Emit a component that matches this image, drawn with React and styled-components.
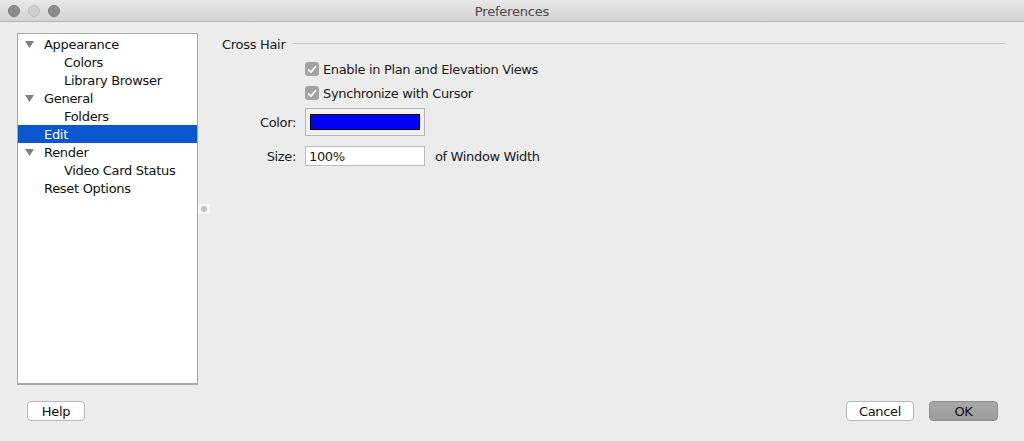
import React from "react";
import styled, { createGlobalStyle } from "styled-components";

const Global = createGlobalStyle`
  html, body { margin: 0; padding: 0; background: #ececec; }
  body { font-family: "DejaVu Sans", "Liberation Sans", sans-serif; font-size: 12px; color: #1a1a1a; }
  * { box-sizing: border-box; }
`;

const Window = styled.div`
  width: 1024px;
  height: 441px;
  display: flex;
  flex-direction: column;
  background: #ececec;
  overflow: hidden;
`;

const TitleBar = styled.div`
  height: 22px;
  flex: none;
  display: grid;
  grid-template-columns: 1fr auto 1fr;
  align-items: center;
  background: linear-gradient(#e9e9e9, #d3d3d3);
  border-bottom: 1px solid #b4b4b4;
`;

const Lights = styled.div`
  display: flex;
  gap: 8px;
  padding-left: 8px;
`;

const Light = styled.span`
  width: 12px;
  height: 12px;
  border-radius: 50%;
  background: ${(p) => (p.$dim ? "#d0d0d0" : "#8c8c8c")};
  border: 1px solid ${(p) => (p.$dim ? "#bdbdbd" : "#7b7b7b")};
`;

const Title = styled.div`
  font-size: 13px;
  color: #4a4a4a;
  letter-spacing: -0.2px;
  padding-top: 1px;
`;

const Main = styled.div`
  flex: 1;
  display: flex;
  padding-top: 11px;
  min-height: 0;
`;

const Sidebar = styled.div`
  margin-left: 17px;
  width: 181px;
  height: 352px;
  flex: none;
  background: #fff;
  border: 1px solid #a7a7a7;
  border-bottom-width: 2px;
  padding-top: 1px;
`;

const Row = styled.div`
  height: 18px;
  display: flex;
  align-items: center;
  position: relative;
  padding-left: ${(p) => (p.$child ? 46 : 26)}px;
  background: ${(p) => (p.$selected ? "#0b57d0" : "transparent")};
  color: ${(p) => (p.$selected ? "#fff" : "#111")};
  font-size: 13px;
  letter-spacing: -0.3px;
`;

const Tri = styled.svg`
  position: absolute;
  left: 7px;
  top: 6px;
`;

const Splitter = styled.div`
  width: 24px;
  flex: none;
  display: flex;
  align-items: center;
`;

const Handle = styled.div`
  width: 12px;
  height: 10px;
  background: #f6f6f6;
  display: flex;
  align-items: center;
  justify-content: center;
  &::after {
    content: "";
    width: 6px;
    height: 6px;
    border-radius: 50%;
    background: #c4c4c4;
  }
`;

const Content = styled.div`
  flex: 1;
  padding-right: 19px;
  display: flex;
  flex-direction: column;
`;

const Heading = styled.div`
  height: 22px;
  display: flex;
  align-items: center;
  gap: 8px;
  font-size: 13px;
  color: #1a1a1a;
  letter-spacing: -0.3px;
  &::after {
    content: "";
    flex: 1;
    height: 1px;
    background: #c9c9c9;
    margin-top: -1px;
  }
`;

const Form = styled.div`
  display: grid;
  grid-template-columns: 74px auto 1fr;
  column-gap: 9px;
  align-items: center;
  margin-top: 5px;
  font-size: 13px;
  letter-spacing: -0.35px;
`;

const Label = styled.div`
  text-align: right;
  grid-column: 1;
`;

const CheckRow = styled.label`
  grid-column: 2 / 4;
  height: 18px;
  display: flex;
  align-items: center;
  gap: 4px;
  margin-bottom: ${(p) => p.$mb || 0}px;
`;

const Box = styled.span`
  width: 14px;
  height: 14px;
  border-radius: 3px;
  background: #a4a4a4;
  display: flex;
  align-items: center;
  justify-content: center;
`;

const Well = styled.div`
  grid-column: 2;
  width: 120px;
  height: 28px;
  border: 1px solid #b5b5b5;
  background: #f0f0f0;
  padding: 5px 4px;
  margin-top: 6px;
`;

const Swatch = styled.div`
  width: 100%;
  height: 100%;
  background: ${(p) => p.$color};
  border: 1px solid #000;
`;

const Input = styled.div`
  grid-column: 2;
  width: 120px;
  height: 20px;
  border: 1px solid #bababa;
  background: #fff;
  padding-left: 3px;
  display: flex;
  align-items: center;
  margin-top: 10px;
`;

const After = styled.div`
  grid-column: 3;
  margin-top: 10px;
  padding-left: 1px;
`;

const RowLabel = styled(Label)`
  margin-top: ${(p) => p.$mt || 0}px;
`;

const Footer = styled.div`
  height: 56px;
  flex: none;
  display: flex;
  align-items: flex-start;
  padding: 16px 26px 0 27px;
  gap: 15px;
`;

const Button = styled.button`
  height: 20px;
  width: ${(p) => p.$w}px;
  border-radius: 4px;
  font-family: inherit;
  font-size: 13px;
  letter-spacing: -0.3px;
  padding: 0;
  color: #111;
  border: 1px solid ${(p) => (p.$primary ? "#8f8f8f" : "#b8b8b8")};
  background: ${(p) => (p.$primary ? "linear-gradient(#a9a9a9, #9c9c9c)" : "#fff")};
  margin-left: ${(p) => (p.$push ? "auto" : "0")};
`;

const tree = [
  { label: "Appearance", open: true },
  { label: "Colors", child: true },
  { label: "Library Browser", child: true },
  { label: "General", open: true },
  { label: "Folders", child: true },
  { label: "Edit", selected: true },
  { label: "Render", open: true },
  { label: "Video Card Status", child: true },
  { label: "Reset Options" },
];

const Check = () => (
  <svg width="10" height="9" viewBox="0 0 10 9">
    <path d="M1.5 4.8 L4 7.2 L8.5 1.5" fill="none" stroke="#fff" strokeWidth="1.6" strokeLinecap="round" strokeLinejoin="round" />
  </svg>
);

export default function App() {
  return (
    <>
      <Global />
      <Window>
        <TitleBar>
          <Lights>
            <Light />
            <Light $dim />
            <Light />
          </Lights>
          <Title>Preferences</Title>
          <div />
        </TitleBar>
        <Main>
          <Sidebar>
            {tree.map((t) => (
              <Row key={t.label} $child={t.child} $selected={t.selected}>
                {t.open && (
                  <Tri width="9" height="7" viewBox="0 0 9 7">
                    <path d="M0 0 H9 L4.5 7 Z" fill="#808080" />
                  </Tri>
                )}
                {t.label}
              </Row>
            ))}
          </Sidebar>
          <Splitter>
            <Handle />
          </Splitter>
          <Content>
            <Heading>Cross Hair</Heading>
            <Form>
              <CheckRow $mb={6}>
                <Box><Check /></Box>
                Enable in Plan and Elevation Views
              </CheckRow>
              <CheckRow>
                <Box><Check /></Box>
                Synchronize with Cursor
              </CheckRow>
              <RowLabel $mt={6}>Color:</RowLabel>
              <Well>
                <Swatch $color="#0000ff" />
              </Well>
              <div />
              <RowLabel $mt={10}>Size:</RowLabel>
              <Input>100%</Input>
              <After>of Window Width</After>
            </Form>
          </Content>
        </Main>
        <Footer>
          <Button $w={58}>Help</Button>
          <Button $w={68} $push>Cancel</Button>
          <Button $w={69} $primary>OK</Button>
        </Footer>
      </Window>
    </>
  );
}
